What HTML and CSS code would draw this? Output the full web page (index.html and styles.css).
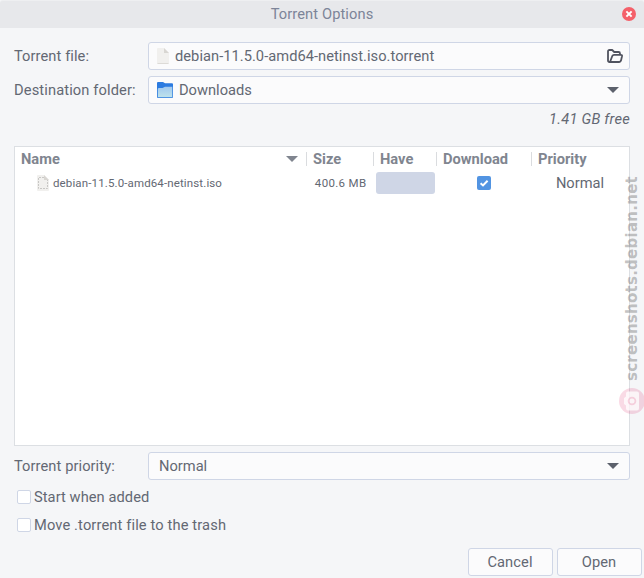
FILE: index.html
```html
<!DOCTYPE html>
<html lang="en">
<head>
<meta charset="utf-8">
<title>Torrent Options</title>
<link rel="stylesheet" href="styles.css">
</head>
<body>
<div class="dialog">
  <header class="titlebar">
    <span class="title">Torrent Options</span>
    <svg class="close" width="14" height="14" viewBox="0 0 14 14"><circle cx="7" cy="7" r="7" fill="#f4606a"/><path d="M5.1 5.1l3.8 3.8M8.9 5.1L5.1 8.9" stroke="#fff" stroke-width="2" stroke-linecap="square"/></svg>
  </header>
  <main class="content">
    <div class="row">
      <label class="label t-file">Torrent file:</label>
      <div class="field">
        <svg class="doc" width="12" height="16" viewBox="0 0 12 16"><path d="M0 1Q0 0 1 0H7L12 5V15Q12 16 11 16H1Q0 16 0 15Z" fill="#f1f0ee"/><path d="M7 0l5 5H7z" fill="#d8d6d2"/><path d="M.5 15.5h11" stroke="#dddbd7"/></svg>
        <span class="t-path">debian-11.5.0-amd64-netinst.iso.torrent</span>
        <svg class="open-icon" width="16" height="14" viewBox="0 0 16 14" fill="none" stroke="#50535f" stroke-width="1.8" stroke-linejoin="round"><path d="M3.2 13H2.5Q1 13 1 11.5V2.5Q1 1 2.5 1H5.2L7.2 3H11.5Q13 3 13 4.5V5.5"/><path d="M3 13L5.2 7.2Q5.8 5.8 7 5.8H13.7Q15.3 5.8 15 7.3L14 11.6Q13.6 13 12.3 13Z"/></svg>
      </div>
    </div>
    <div class="row">
      <label class="label t-dest">Destination folder:</label>
      <div class="field folder-field">
        <svg class="folder" width="16" height="16" viewBox="0 0 16 16"><defs><linearGradient id="g" x1="0" y1="0" x2="0" y2="1"><stop offset="0" stop-color="#a0c8ef"/><stop offset="1" stop-color="#bfe3ea"/></linearGradient></defs><path d="M0 1Q0 0 1 0H6L8 1.3H15Q16 1.3 16 2.3V15Q16 16 15 16H1Q0 16 0 15Z" fill="#2c7be0"/><path d="M.8 7Q.8 6 2 6H5.5L8 4.8H15.3V15.3H.8Z" fill="url(#g)"/></svg>
        <span class="t-down">Downloads</span>
        <i class="arrow"></i>
      </div>
    </div>
    <div class="free"><span>1.41 GB free</span></div>
    <section class="tree">
      <div class="grid head">
        <div class="cell name">Name<i class="arrow small"></i></div>
        <div class="cell sep">Size</div>
        <div class="cell sep">Have</div>
        <div class="cell sep">Download</div>
        <div class="cell sep">Priority</div>
      </div>
      <div class="grid item">
        <div class="file">
          <svg width="12" height="16" viewBox="0 0 12 16"><path d="M0 1Q0 0 1 0H7L12 5V15Q12 16 11 16H1Q0 16 0 15Z" fill="#f1f0ee"/><path d="M7 0l5 5H7z" fill="#d8d6d2"/><path d="M7 2.5H1.5V13.5H10.5V5" fill="none" stroke="#c8c7c5" stroke-dasharray="2 1"/></svg>
          <span>debian-11.5.0-amd64-netinst.iso</span>
        </div>
        <div class="size">400.6 MB</div>
        <div class="have"></div>
        <div class="dl"><svg width="14" height="14" viewBox="0 0 14 14"><rect width="14" height="14" rx="2" fill="#5294e2"/><path d="M3.6 7.2L6 9.4L10.6 4.7" fill="none" stroke="#fff" stroke-width="2"/></svg></div>
        <div class="prio">Normal</div>
      </div>
    </section>
    <div class="row priority">
      <label class="label t-prio">Torrent priority:</label>
      <div class="field"><span class="t-normal">Normal</span><i class="arrow"></i></div>
    </div>
    <label class="check"><i class="box"></i><span class="t-start">Start when added</span></label>
    <label class="check"><i class="box"></i><span class="t-trash">Move .torrent file to the trash</span></label>
  </main>
  <footer class="buttons">
    <button>Cancel</button>
    <button>Open</button>
  </footer>
  <div class="watermark">
    <span>screenshots.debian.net</span>
    <svg width="26" height="26" viewBox="0 0 26 26"><circle cx="13" cy="13" r="13" fill="#d70a53" fill-opacity=".15"/><path d="M9 3.5H18Q20 3.5 20 5.5V20.5Q20 22.5 18 22.5H9Q7 22.5 7 20.5V17.5L5 16V10L7 8.5V5.5Q7 3.5 9 3.5Z" fill="#fff" fill-opacity=".75"/><circle cx="13" cy="13" r="3.4" fill="none" stroke="#d70a53" stroke-opacity=".16" stroke-width="1.8"/></svg>
  </div>
</div>
</body>
</html>
```
FILE: styles.css
```css
* { box-sizing: border-box; }
body {
  margin: 0;
  background: #f5f6f8;
  color: #636873;
  font: 14.67px/28px Roboto, sans-serif;
  overflow: hidden;
}
.dialog {
  position: relative;
  width: 644px;
  height: 578px;
  display: flex;
  flex-direction: column;
  white-space: nowrap;
}
.titlebar {
  height: 28px;
  padding: 0 8px 0 22px;
  background: #e7e8eb;
  border-top: 1px solid #eeeff1;
  border-radius: 3px 3px 0 0;
  display: flex;
  align-items: center;
  color: #7c8498;
}
.close { margin-top: -1px; }
.title { flex: 1; text-align: center; line-height: 26px; margin-top: -2px; letter-spacing: .1px; }
.content { padding: 14px 14px 0; }
.row { display: flex; height: 28px; margin-bottom: 6px; }
.label { width: 134px; }
.t-file { letter-spacing: .08px; }
.t-dest { letter-spacing: .12px; }
.t-path { letter-spacing: .04px; }
.t-prio { letter-spacing: .08px; }
.t-start { letter-spacing: .06px; }
.t-trash { letter-spacing: .13px; }
.field {
  flex: 1;
  display: flex;
  align-items: center;
  height: 28px;
  padding: 0 6px 0 8px;
  line-height: 26px;
  background: #fbfbfc;
  border: 1px solid #cfd6e6;
  border-radius: 3px;
}
.doc { margin-right: 6px; }
.folder { margin-right: 6px; }
.open-icon { margin-left: auto; }
.arrow {
  margin-left: auto;
  margin-right: 4px;
  border: 6px solid transparent;
  border-top-color: #5c616c;
  border-bottom: 0;
}
.free {
  height: 36px;
  margin-top: -4px;
  text-align: right;
  font-style: italic;
  line-height: 27px;
  letter-spacing: .24px;
}
.tree {
  height: 300px;
  margin-top: 4px;
  background: #fff;
  border: 1px solid #dcdfe3;
  overflow: hidden;
}
.grid { display: grid; grid-template-columns: 291px 67px 63px 95px 98px; }
.head { height: 24px; line-height: 23px; font-weight: 700; color: #80858f; align-items: center; }
.cell { height: 24px; padding-left: 6px; }
.name { display: flex; align-items: center; line-height: 24px; }
.sep { display: flex; align-items: center; }
.sep::before { content: ""; width: 1px; height: 14px; margin-left: -6px; margin-right: 6px; background: #dadcdf; }
.small { border-top-color: #80858f; margin-right: 8px; }
.item { height: 24px; align-items: center; line-height: 24px; }
.file { display: flex; align-items: center; padding-left: 22px; font-size: 11.5px; letter-spacing: .13px; }
.file svg { margin-right: 4px; }
.size { font-size: 11.5px; text-align: right; padding-right: 6.5px; letter-spacing: .34px; }
.have { height: 22px; width: 59px; margin-left: 3px; background: #cfd6e6; border-radius: 3px; }
.dl { display: flex; justify-content: center; }
.prio { text-align: center; }
.priority { margin-top: 6px; margin-bottom: 3px; }
.t-normal { padding-left: 2px; }
.check { display: flex; align-items: center; height: 28px; }
.box { width: 14px; height: 14px; margin: 0 3px; background: #fff; border: 1px solid #cfd6e6; border-radius: 2px; }
.buttons { display: flex; justify-content: flex-end; gap: 4px; margin-top: 9px; padding-right: 2px; }
button {
  width: 85px;
  height: 28px;
  padding: 0 1px 0 0;
  font: inherit;
  line-height: 26px;
  letter-spacing: .1px;
  color: inherit;
  background: #fbfbfc;
  border: 1px solid #cfd6e6;
  border-radius: 3px;
}
.watermark {
  position: absolute;
  top: 176px;
  right: -1px;
  width: 26px;
  display: flex;
  flex-direction: column;
  align-items: center;
  gap: 7px;
}
.watermark span {
  writing-mode: vertical-rl;
  transform: rotate(180deg);
  font: bold 15px/20px "DejaVu Sans", sans-serif;
  letter-spacing: .26px;
  color: rgba(100, 100, 100, .4);
}
```
